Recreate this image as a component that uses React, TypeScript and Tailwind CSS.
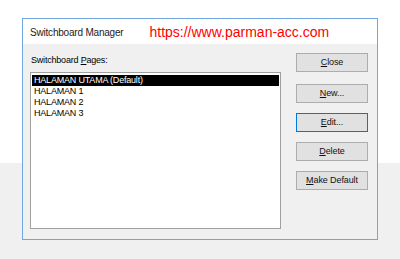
const pages = ['HALAMAN UTAMA (Default)', 'HALAMAN 1', 'HALAMAN 2', 'HALAMAN 3'];

function Btn({ hot, rest, focus, extra }: { hot: string; rest: string; focus?: boolean; extra?: string }) {
  const base =
    'h-[19px] w-[72px] border bg-[#e1e1e1] text-[9px] leading-none tracking-[-0.1px] text-[#111] ' + (extra ?? '');
  return (
    <button className={focus ? base + ' border-[#0078d7]' : base + ' border-[#adadad]'}>
      <span className="underline">{hot}</span>
      {rest}
    </button>
  );
}

export default function App() {
  return (
    <div className="h-[259px] w-[400px] bg-[linear-gradient(to_bottom,#ffffff_163px,#f0f0f0_163px)] pl-[22px] pt-[18px] font-['Liberation_Sans',Arial,sans-serif]">
      <div className="flex h-[222px] w-[356px] flex-col border border-[#72a6e0]">
        {/* title bar */}
        <div className="flex h-[25px] items-center bg-white pl-[7px] pt-[1px]">
          <span className="text-[10px] tracking-[-0.2px] text-[#222]">Switchboard Manager</span>
          <span className="ml-[26px] text-[14px] text-[#ff0000]">https://www.parman-acc.com</span>
        </div>

        {/* body */}
        <div className="flex flex-1 bg-[#f0f0f0] pl-[7px] pr-[9px]">
          <div className="flex flex-col">
            <div className="mt-[10px] h-[18px] pl-[1px] text-[9px] tracking-[-0.2px] text-black">
              Switchboard <span className="underline">P</span>ages:
            </div>
            <div className="h-[157px] w-[251px] border border-[#a0a0a0] bg-white p-[1px] pt-[2px]">
              {pages.map((p, i) => (
                <div
                  key={p}
                  className={
                    i === 0
                      ? 'h-[11px] bg-black pl-[2px] text-[9px] leading-[11px] tracking-[-0.2px] text-white'
                      : 'h-[11px] pl-[2px] text-[9px] leading-[11px] tracking-[-0.2px] text-black'
                  }
                >
                  {p}
                </div>
              ))}
            </div>
          </div>

          <div className="ml-auto mt-[9px] flex flex-col gap-[10px]">
            <Btn hot="C" rest="lose" />
            <Btn hot="N" rest="ew..." extra="mt-[2px]" />
            <Btn hot="E" rest="dit..." focus />
            <Btn hot="D" rest="elete" />
            <Btn hot="M" rest="ake Default" />
          </div>
        </div>
      </div>
    </div>
  );
}
